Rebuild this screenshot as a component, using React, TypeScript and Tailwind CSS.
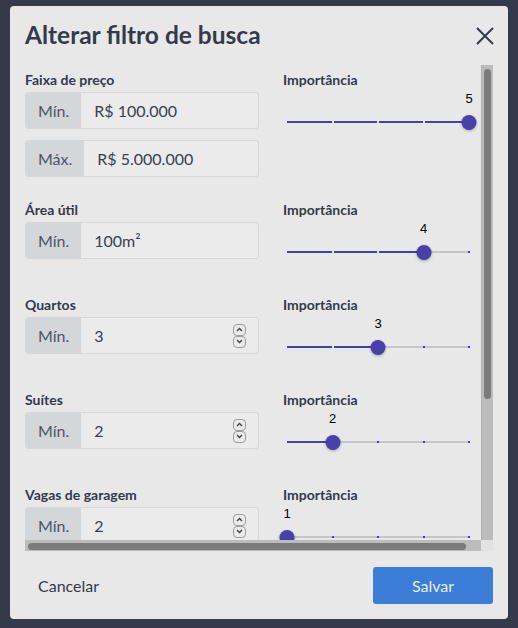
import React from 'react';

type Field = {
  label: string;
  inputs: { addon: string; value: string }[];
  spinner?: boolean;
  importance: number;
  tall?: boolean;
};

const fields: Field[] = [
  {
    label: 'Faixa de preço',
    inputs: [
      { addon: 'Mín.', value: 'R$ 100.000' },
      { addon: 'Máx.', value: 'R$ 5.000.000' },
    ],
    importance: 5,
    tall: true,
  },
  { label: 'Área útil', inputs: [{ addon: 'Mín.', value: '100m²' }], importance: 4 },
  { label: 'Quartos', inputs: [{ addon: 'Mín.', value: '3' }], spinner: true, importance: 3 },
  { label: 'Suítes', inputs: [{ addon: 'Mín.', value: '2' }], spinner: true, importance: 2 },
  { label: 'Vagas de garagem', inputs: [{ addon: 'Mín.', value: '2' }], spinner: true, importance: 1 },
];

const Spinner: React.FC = () => (
  <div className="flex flex-col items-center justify-center pr-[12px]">
    <div className="flex h-[12px] w-[13px] items-center justify-center rounded-[4px] border border-[#9c9c9c]">
      <svg width="7" height="5" viewBox="0 0 7 5" fill="none">
        <path d="M1 4 L3.5 1.5 L6 4" stroke="#3a3f4c" strokeWidth="1.3" />
      </svg>
    </div>
    <div className="flex h-[12px] w-[13px] items-center justify-center rounded-[4px] border border-[#9c9c9c]">
      <svg width="7" height="5" viewBox="0 0 7 5" fill="none">
        <path d="M1 1 L3.5 3.5 L6 1" stroke="#3a3f4c" strokeWidth="1.3" />
      </svg>
    </div>
  </div>
);

const InputGroup: React.FC<{ addon: string; value: string; spinner?: boolean; className?: string }> = ({
  addon,
  value,
  spinner,
  className,
}) => (
  <div
    className={`flex h-[37px] w-[234px] overflow-hidden rounded-[3px] border border-[#d6d6d6] bg-[#ebebeb] ${className || ''}`}
  >
    <span className="flex items-center bg-[#d3d7da] px-3 text-[16px] text-[#4f5461]">{addon}</span>
    <span className="flex flex-1 items-center pl-[13px] text-[16px] text-[#3a3f4c]">{value}</span>
    {spinner && <Spinner />}
  </div>
);

const ImportanceSlider: React.FC<{ value: number }> = ({ value }) => {
  const pct = ((value - 1) / 4) * 100;
  const marks = [0, 25, 50, 75, 100];
  return (
    <div className="relative ml-[4px] h-[40px] w-[182px]">
      {/* value label */}
      <span
        className="absolute top-[1px] -translate-x-1/2 text-[13px] font-normal leading-[15px] text-black"
        style={{ left: `${pct}%`, fontFamily: '"Liberation Sans", Arial, sans-serif' }}
      >
        {value}
      </span>
      {/* rail */}
      <div className="absolute left-0 right-0 top-[31px] h-[2px] bg-[#c6c6c6]" />
      {/* track */}
      <div className="absolute left-0 top-[31px] h-[2px] bg-[#4a3fa9]" style={{ width: `${pct}%` }} />
      {marks.map((m) => (
        <div
          key={m}
          className={`absolute top-[31px] h-[2px] w-[2px] -translate-x-1/2 ${
            m < pct && m > 0 ? 'bg-[#e4e4ea]' : m > pct ? 'bg-[#4a3fa9]' : 'bg-transparent'
          }`}
          style={{ left: `${m}%` }}
        />
      ))}
      {/* thumb */}
      <div
        className="absolute top-[24.5px] h-[15px] w-[15px] -translate-x-1/2 rounded-full bg-[#4a3fa9] shadow-[0_1px_3px_rgba(0,0,0,0.3)]"
        style={{ left: `${pct}%` }}
      />
    </div>
  );
};

const App: React.FC = () => {
  return (
    <div
      className="min-h-screen bg-[#343a4a] pt-[6px] pl-[10px]"
      style={{ fontFamily: 'Lato, "Noto Sans", sans-serif' }}
    >
      <div className="flex h-[613px] w-[498px] flex-col rounded-[4px] bg-[#e8e8e8]">
        {/* Header */}
        <div className="flex h-[59px] items-start justify-between pl-[15px] pr-[14px] pt-[13px]">
          <h1 className="text-[24.5px] font-bold leading-8 text-[#343a4a]">Alterar filtro de busca</h1>
          <button className="mt-[8px]">
            <svg width="18" height="18" viewBox="0 0 18 18" fill="none">
              <path d="M1 1 L17 17 M17 1 L1 17" stroke="#343a4a" strokeWidth="2" />
            </svg>
          </button>
        </div>

        {/* Scroll area */}
        <div className="ml-[15px] grid h-[486px] w-[468px] grid-cols-[456px_12px] grid-rows-[475px_11px]">
          <div className="overflow-hidden pt-[5px]">
            <div className="w-[480px]">
              {fields.map((f) => (
                <div
                  key={f.label}
                  className={`grid grid-cols-[234px_1fr] gap-x-[24px] ${f.tall ? 'h-[130px]' : 'h-[95px]'}`}
                >
                  <div>
                    <div className="mb-[2px] text-[14px] font-bold leading-5 text-[#343a4a]">{f.label}</div>
                    {f.inputs.map((inp, i) => (
                      <InputGroup
                        key={inp.addon}
                        addon={inp.addon}
                        value={inp.value}
                        spinner={f.spinner}
                        className={i > 0 ? 'mt-[11px]' : ''}
                      />
                    ))}
                  </div>
                  <div>
                    <div className="text-[14px] font-bold leading-5 text-[#343a4a]">Importância</div>
                    <ImportanceSlider value={f.importance} />
                  </div>
                </div>
              ))}
            </div>
          </div>
          {/* vertical scrollbar */}
          <div className="border-l border-[#b0b0b0] bg-[#bcbcbc] pl-[2px] pt-[4px]">
            <div className="h-[330px] w-[7px] rounded-full bg-[#7b7b7b]" />
          </div>
          {/* horizontal scrollbar */}
          <div className="bg-[#bcbcbc] pl-[3px] pt-[2.5px]">
            <div className="h-[7px] w-[438px] rounded-full bg-[#7b7b7b]" />
          </div>
          <div className="bg-[#e2e2e2]" />
        </div>

        {/* Footer */}
        <div className="flex items-start justify-between px-[15px] pt-[16px]">
          <button className="flex h-[37px] items-center px-[13px] text-[16px] text-[#343a4a]">Cancelar</button>
          <button className="flex h-[37px] w-[120px] items-center justify-center rounded-[3px] bg-[#3b7dd7] text-[16px] text-[#e8eef8]">
            Salvar
          </button>
        </div>
      </div>
    </div>
  );
};

export default App;
